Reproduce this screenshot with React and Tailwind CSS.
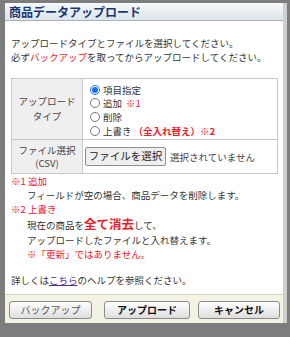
import { useState } from "react";

export default function App() {
  const [type, setType] = useState("item");

  const options = [
    { value: "item", label: "項目指定" },
    { value: "add", label: "追加", note: <span className="text-[#e8202a] ml-[4px]">※1</span> },
    { value: "delete", label: "削除" },
    {
      value: "overwrite",
      label: "上書き",
      note: <span className="text-[#e8202a] font-bold ml-[2px]">（全入れ替え）※2</span>,
    },
  ];

  return (
    <div className="w-[290px] h-[337px] bg-[#7d7d7d] pt-[3px] pl-[5px] overflow-hidden font-['Noto_Sans_CJK_JP',sans-serif]">
      <div className="w-[282px] border-r-[4px] border-[#cfcfcf]">
        {/* title */}
        <div className="h-[18px] pl-[4px] flex items-center bg-gradient-to-b from-[#f6f9fb] to-[#dbe5ea] border-b border-[#a9b1b5]">
          <h2 className="text-[12px] font-bold text-[#1a3772] leading-none">商品データアップロード</h2>
        </div>

        {/* body */}
        <div className="bg-white px-[6px] pt-[15px] pb-[7px] text-[9.5px] leading-[14px] text-[#333]">
          <p>
            アップロードタイプとファイルを選択してください。
            <br />
            必ず<span className="text-[#e8202a]">バックアップ</span>を取ってからアップロードしてください。
          </p>

          <table className="mt-[14px] w-[267px] border-collapse border border-[#c8c8c8]">
            <tbody>
              <tr className="h-[61px]">
                <th className="w-[71px] border border-[#c8c8c8] bg-[#efefef] font-normal text-[#444] text-center leading-[15px]">
                  アップロード
                  <br />
                  タイプ
                </th>
                <td className="border border-[#c8c8c8] pl-[7px] align-top pt-[4px]">
                  {options.map((o) => (
                    <label key={o.value} className="flex items-center h-[13.6px]">
                      <input
                        type="radio"
                        name="type"
                        checked={type === o.value}
                        onChange={() => setType(o.value)}
                        className="m-0 mr-[3px] w-[10px] h-[10px] accent-[#1a6fe8]"
                      />
                      <span>{o.label}</span>
                      {o.note}
                    </label>
                  ))}
                </td>
              </tr>
              <tr className="h-[34px]">
                <th className="border border-[#c8c8c8] bg-[#efefef] font-normal text-[#444] text-center leading-[13px]">
                  ファイル選択
                  <br />
                  (CSV)
                </th>
                <td className="border border-[#c8c8c8] pl-[2px]">
                  <div className="flex items-center">
                    <button className="h-[19px] w-[81px] border border-[#8f8f8f] rounded-[2px] bg-[#efefef] text-[10.5px] text-[#222] leading-none">
                      ファイルを選択
                    </button>
                    <span className="ml-[4px] text-[#444]">選択されていません</span>
                  </div>
                </td>
              </tr>
            </tbody>
          </table>

          <div>
            <p className="text-[#e8202a]">※1 追加</p>
            <p className="pl-[16px]">フィールドが空の場合、商品データを削除します。</p>
            <p className="text-[#e8202a]">※2 上書き</p>
            <p className="pl-[16px] leading-[15px]">
              現在の商品を<span className="text-[#e8202a] font-bold text-[12.5px]">全て消去</span>して、
            </p>
            <p className="pl-[16px]">アップロードしたファイルと入れ替えます。</p>
            <p className="pl-[16px] text-[#e8202a]">※「更新」ではありません。</p>
            <p className="mt-[12px]">
              詳しくは<a href="#" className="text-[#5a2a8e] underline">こちら</a>のヘルプを参照ください。
            </p>
          </div>
        </div>

        {/* footer */}
        <div className="h-[29px] bg-[#f4f2e3] border-t border-[#d6d3c2] pl-[4px] pt-[6px] flex items-start">
          <button className="w-[83px] h-[18px] rounded-[3px] border border-[#8a8a8a] bg-gradient-to-b from-white to-[#dedede] text-[10px] text-[#555] leading-none">
            バックアップ
          </button>
          <button className="ml-[12px] w-[86px] h-[18px] rounded-[3px] border border-[#8a8a8a] bg-gradient-to-b from-white to-[#dedede] text-[10px] font-bold text-[#111] leading-none">
            アップロード
          </button>
          <button className="ml-[8px] w-[82px] h-[18px] rounded-[3px] border border-[#8a8a8a] bg-gradient-to-b from-white to-[#dedede] text-[10px] font-bold text-[#111] leading-none">
            キャンセル
          </button>
        </div>
      </div>
    </div>
  );
}
